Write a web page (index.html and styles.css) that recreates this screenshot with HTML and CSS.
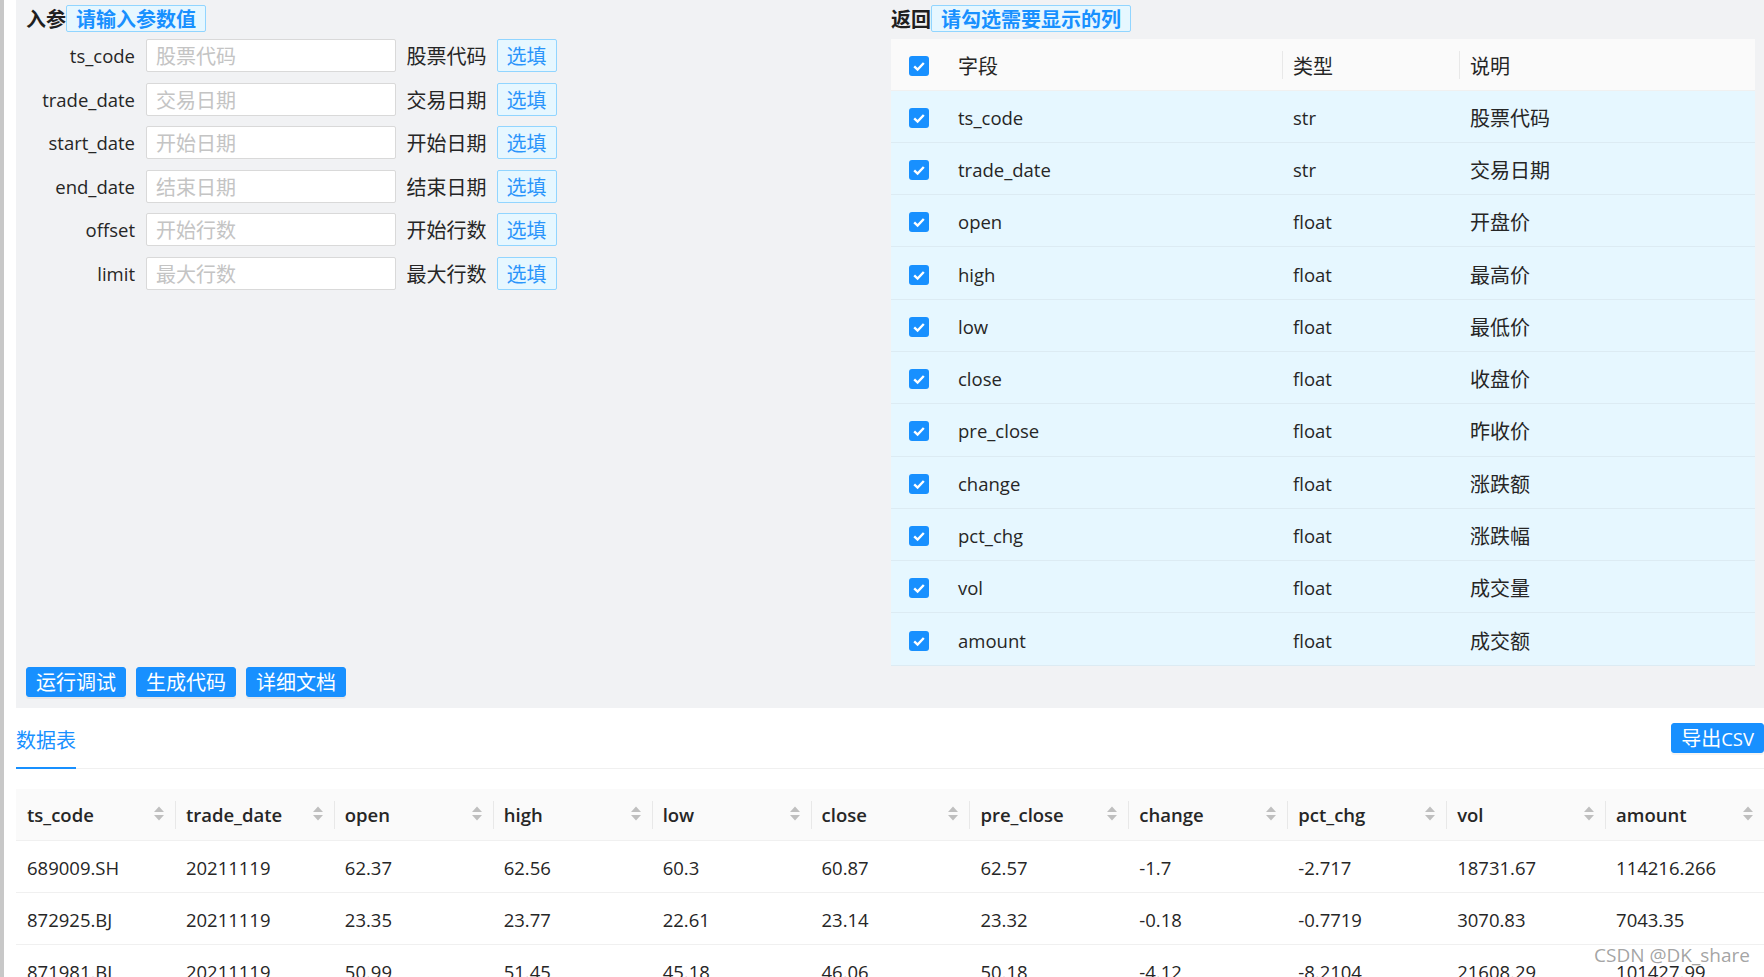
FILE: index.html
```html
<!DOCTYPE html>
<html lang="zh-CN">
<head>
<meta charset="utf-8">
<title>接口调试</title>
<link rel="stylesheet" href="styles.css">
</head>
<body>
<div class="app">
  <section class="panel">
    <div class="cols">
      <div class="col-in">
        <div class="title"><span class="title-text">入参</span><span class="tag">请输入参数值</span></div>
        <div class="form">
          <div class="frow"><label class="flabel">ts_code</label><input class="finput" placeholder="股票代码"><span class="fdesc">股票代码</span><button class="btn-fill">选填</button></div>
          <div class="frow"><label class="flabel">trade_date</label><input class="finput" placeholder="交易日期"><span class="fdesc">交易日期</span><button class="btn-fill">选填</button></div>
          <div class="frow"><label class="flabel">start_date</label><input class="finput" placeholder="开始日期"><span class="fdesc">开始日期</span><button class="btn-fill">选填</button></div>
          <div class="frow"><label class="flabel">end_date</label><input class="finput" placeholder="结束日期"><span class="fdesc">结束日期</span><button class="btn-fill">选填</button></div>
          <div class="frow"><label class="flabel">offset</label><input class="finput" placeholder="开始行数"><span class="fdesc">开始行数</span><button class="btn-fill">选填</button></div>
          <div class="frow"><label class="flabel">limit</label><input class="finput" placeholder="最大行数"><span class="fdesc">最大行数</span><button class="btn-fill">选填</button></div>
        </div>
      </div>
      <div class="col-out">
        <div class="title"><span class="title-text">返回</span><span class="tag">请勾选需要显示的列</span></div>
        <div class="rtable">
          <div class="rrow rhead"><div class="rc rc-check"><span class="cb"><svg viewBox="0 0 20 20" width="20" height="20"><path d="M5.2 10.3 L8.6 13.5 L14.8 7" fill="none" stroke="#fff" stroke-width="2.4"/></svg></span></div><div class="rc">字段</div><div class="rc rc-div">类型</div><div class="rc rc-div">说明</div></div>
          <div class="rrow"><div class="rc rc-check"><span class="cb"><svg viewBox="0 0 20 20" width="20" height="20"><path d="M5.2 10.3 L8.6 13.5 L14.8 7" fill="none" stroke="#fff" stroke-width="2.4"/></svg></span></div><div class="rc lt">ts_code</div><div class="rc lt">str</div><div class="rc">股票代码</div></div>
          <div class="rrow"><div class="rc rc-check"><span class="cb"><svg viewBox="0 0 20 20" width="20" height="20"><path d="M5.2 10.3 L8.6 13.5 L14.8 7" fill="none" stroke="#fff" stroke-width="2.4"/></svg></span></div><div class="rc lt">trade_date</div><div class="rc lt">str</div><div class="rc">交易日期</div></div>
          <div class="rrow"><div class="rc rc-check"><span class="cb"><svg viewBox="0 0 20 20" width="20" height="20"><path d="M5.2 10.3 L8.6 13.5 L14.8 7" fill="none" stroke="#fff" stroke-width="2.4"/></svg></span></div><div class="rc lt">open</div><div class="rc lt">float</div><div class="rc">开盘价</div></div>
          <div class="rrow"><div class="rc rc-check"><span class="cb"><svg viewBox="0 0 20 20" width="20" height="20"><path d="M5.2 10.3 L8.6 13.5 L14.8 7" fill="none" stroke="#fff" stroke-width="2.4"/></svg></span></div><div class="rc lt">high</div><div class="rc lt">float</div><div class="rc">最高价</div></div>
          <div class="rrow"><div class="rc rc-check"><span class="cb"><svg viewBox="0 0 20 20" width="20" height="20"><path d="M5.2 10.3 L8.6 13.5 L14.8 7" fill="none" stroke="#fff" stroke-width="2.4"/></svg></span></div><div class="rc lt">low</div><div class="rc lt">float</div><div class="rc">最低价</div></div>
          <div class="rrow"><div class="rc rc-check"><span class="cb"><svg viewBox="0 0 20 20" width="20" height="20"><path d="M5.2 10.3 L8.6 13.5 L14.8 7" fill="none" stroke="#fff" stroke-width="2.4"/></svg></span></div><div class="rc lt">close</div><div class="rc lt">float</div><div class="rc">收盘价</div></div>
          <div class="rrow"><div class="rc rc-check"><span class="cb"><svg viewBox="0 0 20 20" width="20" height="20"><path d="M5.2 10.3 L8.6 13.5 L14.8 7" fill="none" stroke="#fff" stroke-width="2.4"/></svg></span></div><div class="rc lt">pre_close</div><div class="rc lt">float</div><div class="rc">昨收价</div></div>
          <div class="rrow"><div class="rc rc-check"><span class="cb"><svg viewBox="0 0 20 20" width="20" height="20"><path d="M5.2 10.3 L8.6 13.5 L14.8 7" fill="none" stroke="#fff" stroke-width="2.4"/></svg></span></div><div class="rc lt">change</div><div class="rc lt">float</div><div class="rc">涨跌额</div></div>
          <div class="rrow"><div class="rc rc-check"><span class="cb"><svg viewBox="0 0 20 20" width="20" height="20"><path d="M5.2 10.3 L8.6 13.5 L14.8 7" fill="none" stroke="#fff" stroke-width="2.4"/></svg></span></div><div class="rc lt">pct_chg</div><div class="rc lt">float</div><div class="rc">涨跌幅</div></div>
          <div class="rrow"><div class="rc rc-check"><span class="cb"><svg viewBox="0 0 20 20" width="20" height="20"><path d="M5.2 10.3 L8.6 13.5 L14.8 7" fill="none" stroke="#fff" stroke-width="2.4"/></svg></span></div><div class="rc lt">vol</div><div class="rc lt">float</div><div class="rc">成交量</div></div>
          <div class="rrow"><div class="rc rc-check"><span class="cb"><svg viewBox="0 0 20 20" width="20" height="20"><path d="M5.2 10.3 L8.6 13.5 L14.8 7" fill="none" stroke="#fff" stroke-width="2.4"/></svg></span></div><div class="rc lt">amount</div><div class="rc lt">float</div><div class="rc">成交额</div></div>
        </div>
      </div>
    </div>
    <div class="actions">
      <button class="btn-primary">运行调试</button>
      <button class="btn-primary">生成代码</button>
      <button class="btn-primary">详细文档</button>
    </div>
  </section>

  <section class="data">
    <div class="tabs-nav">
      <div class="tab">数据表</div>
      <button class="btn-primary btn-export">导出<span class="lt-in">CSV</span></button>
    </div>
    <table class="dtable">
      <thead>
        <tr>
          <th><div class="th-in"><span>ts_code</span><svg class="sorter" viewBox="0 0 10 15" width="10" height="15"><path d="M0 6 L5 0.5 L10 6 Z M0 9 L10 9 L5 14.5 Z" fill="#bfbfbf"/></svg></div></th>
          <th><div class="th-in"><span>trade_date</span><svg class="sorter" viewBox="0 0 10 15" width="10" height="15"><path d="M0 6 L5 0.5 L10 6 Z M0 9 L10 9 L5 14.5 Z" fill="#bfbfbf"/></svg></div></th>
          <th><div class="th-in"><span>open</span><svg class="sorter" viewBox="0 0 10 15" width="10" height="15"><path d="M0 6 L5 0.5 L10 6 Z M0 9 L10 9 L5 14.5 Z" fill="#bfbfbf"/></svg></div></th>
          <th><div class="th-in"><span>high</span><svg class="sorter" viewBox="0 0 10 15" width="10" height="15"><path d="M0 6 L5 0.5 L10 6 Z M0 9 L10 9 L5 14.5 Z" fill="#bfbfbf"/></svg></div></th>
          <th><div class="th-in"><span>low</span><svg class="sorter" viewBox="0 0 10 15" width="10" height="15"><path d="M0 6 L5 0.5 L10 6 Z M0 9 L10 9 L5 14.5 Z" fill="#bfbfbf"/></svg></div></th>
          <th><div class="th-in"><span>close</span><svg class="sorter" viewBox="0 0 10 15" width="10" height="15"><path d="M0 6 L5 0.5 L10 6 Z M0 9 L10 9 L5 14.5 Z" fill="#bfbfbf"/></svg></div></th>
          <th><div class="th-in"><span>pre_close</span><svg class="sorter" viewBox="0 0 10 15" width="10" height="15"><path d="M0 6 L5 0.5 L10 6 Z M0 9 L10 9 L5 14.5 Z" fill="#bfbfbf"/></svg></div></th>
          <th><div class="th-in"><span>change</span><svg class="sorter" viewBox="0 0 10 15" width="10" height="15"><path d="M0 6 L5 0.5 L10 6 Z M0 9 L10 9 L5 14.5 Z" fill="#bfbfbf"/></svg></div></th>
          <th><div class="th-in"><span>pct_chg</span><svg class="sorter" viewBox="0 0 10 15" width="10" height="15"><path d="M0 6 L5 0.5 L10 6 Z M0 9 L10 9 L5 14.5 Z" fill="#bfbfbf"/></svg></div></th>
          <th><div class="th-in"><span>vol</span><svg class="sorter" viewBox="0 0 10 15" width="10" height="15"><path d="M0 6 L5 0.5 L10 6 Z M0 9 L10 9 L5 14.5 Z" fill="#bfbfbf"/></svg></div></th>
          <th><div class="th-in"><span>amount</span><svg class="sorter" viewBox="0 0 10 15" width="10" height="15"><path d="M0 6 L5 0.5 L10 6 Z M0 9 L10 9 L5 14.5 Z" fill="#bfbfbf"/></svg></div></th>
        </tr>
      </thead>
      <tbody>
        <tr><td>689009.SH</td><td>20211119</td><td>62.37</td><td>62.56</td><td>60.3</td><td>60.87</td><td>62.57</td><td>-1.7</td><td>-2.717</td><td>18731.67</td><td>114216.266</td></tr>
        <tr><td>872925.BJ</td><td>20211119</td><td>23.35</td><td>23.77</td><td>22.61</td><td>23.14</td><td>23.32</td><td>-0.18</td><td>-0.7719</td><td>3070.83</td><td>7043.35</td></tr>
        <tr><td>871981.BJ</td><td>20211119</td><td>50.99</td><td>51.45</td><td>45.18</td><td>46.06</td><td>50.18</td><td>-4.12</td><td>-8.2104</td><td>21608.29</td><td>101427.99</td></tr>
      </tbody>
    </table>
  </section>
  <div class="watermark">CSDN @DK_share</div>
</div>
</body>
</html>
```

FILE: styles.css
```css
html, body {
  margin: 0;
  padding: 0;
  overflow: hidden;
  background: #fff;
}

body {
  font-family: "Noto Sans CJK SC", "Noto Sans", sans-serif;
  font-size: 20px;
  color: #262626;
}

/* Latin text: Segoe-like proportions */
.lt,
.flabel,
.dtable th,
.dtable td {
  font-family: "Open Sans", "Noto Sans CJK SC", sans-serif;
  font-size: 18.5px;
}

.lt-in {
  font-family: "Open Sans", "Noto Sans CJK SC", sans-serif;
  font-size: 18.5px;
}

.app {
  position: relative;
  height: 977px;
  box-sizing: border-box;
  border-left: 4px solid #c8c8c8;
  padding-left: 12px;
  overflow: hidden;
}

/* ---------- top panel ---------- */
.panel {
  background: #f1f2f4;
  padding: 5px 9px 11px 10px;
}

.cols {
  display: grid;
  grid-template-columns: 1fr 864px;
  column-gap: 10px;
  align-items: start;
}

.title {
  display: flex;
  align-items: center;
  height: 27px;
  margin-bottom: 7px;
}

.title-text {
  font-weight: 700;
  line-height: 27px;
  color: #1f1f1f;
}

.tag {
  height: 27px;
  box-sizing: border-box;
  line-height: 25px;
  padding: 0 9px;
  border: 1px solid #91d5ff;
  border-radius: 2px;
  background: #e6f7ff;
  color: #1890ff;
  font-weight: 700;
}

.form {
  display: flex;
  flex-direction: column;
  gap: 10.6px;
}

.frow {
  display: flex;
  align-items: center;
  height: 33px;
}

.flabel {
  flex: none;
  width: 109px;
  margin-right: 11px;
  text-align: right;
  line-height: 33px;
}

.finput {
  flex: none;
  width: 249.5px;
  height: 33px;
  box-sizing: border-box;
  padding: 0 9px;
  border: 1px solid #d9d9d9;
  border-radius: 2px;
  background: #fff;
  font-family: inherit;
  font-size: 20px;
  color: #262626;
  outline: none;
}

.finput::placeholder {
  color: #c4c4c4;
}

.fdesc {
  flex: none;
  margin-left: 11px;
  line-height: 33px;
}

.btn-fill {
  flex: none;
  margin-left: 10px;
  height: 33px;
  box-sizing: border-box;
  padding: 0 9px;
  border: 1px solid #91d5ff;
  border-radius: 2px;
  background: #e6f7ff;
  color: #2b95fb;
  font-family: inherit;
  font-size: 20px;
  line-height: 31px;
}

/* return column table */
.rtable {
  background: #e6f7ff;
}

.rrow {
  display: grid;
  grid-template-columns: 56px 335px 177px 1fr;
  align-items: center;
  height: 52.3px;
  box-sizing: border-box;
  padding-top: 3px;
  border-bottom: 1px solid #dcebf3;
}

.rhead {
  height: 51.5px;
  background: #fafafa;
  border-bottom-color: #f0f0f0;
}

.rc {
  position: relative;
  padding: 0 11px;
  line-height: 28px;
}

.rc-check {
  display: flex;
  justify-content: center;
  padding: 0;
}

.rc-div::before {
  content: "";
  position: absolute;
  left: 0;
  top: -1px;
  width: 1px;
  height: 28px;
  background: #e8e8e8;
}

.cb {
  display: flex;
  width: 20px;
  height: 20px;
  border-radius: 3px;
  background: #1890ff;
}

/* action buttons */
.actions {
  display: flex;
  gap: 10px;
  margin-top: 1px;
}

.btn-primary {
  height: 30px;
  box-sizing: border-box;
  padding: 0 9px;
  border: 1px solid #1890ff;
  border-radius: 3px;
  background: #1890ff;
  color: #fff;
  font-family: inherit;
  font-size: 20px;
  line-height: 28px;
  box-shadow: 0 2px 0 rgba(0, 0, 0, 0.045);
}

/* ---------- data section ---------- */
.tabs-nav {
  display: flex;
  justify-content: space-between;
  align-items: center;
  height: 60px;
  border-bottom: 1px solid #f0f0f0;
}

.tab {
  align-self: stretch;
  display: flex;
  align-items: center;
  box-sizing: border-box;
  padding-top: 4px;
  margin-bottom: -1px;
  border-bottom: 2px solid #1890ff;
  color: #1890ff;
}

.btn-export {
  padding: 0 9px;
}

.dtable {
  width: 100%;
  table-layout: fixed;
  border-collapse: separate;
  border-spacing: 0;
  margin-top: 20px;
}

.dtable th,
.dtable td {
  height: 52px;
  box-sizing: border-box;
  padding: 3px 11px 0;
  border-bottom: 1px solid #f0f0f0;
  text-align: left;
  white-space: nowrap;
  line-height: 28px;
}

.dtable th {
  position: relative;
  padding-top: 2px;
  background: #fafafa;
  font-weight: 600;
  color: #262626;
}

.dtable th + th::before {
  content: "";
  position: absolute;
  left: 0;
  top: 12px;
  width: 1px;
  height: 28px;
  background: #e8e8e8;
}

.th-in {
  display: flex;
  justify-content: space-between;
  align-items: center;
}

.sorter {
  flex: none;
  margin-top: -4px;
}

.watermark {
  position: absolute;
  right: 14px;
  top: 942px;
  font-family: "Open Sans", sans-serif;
  font-size: 19px;
  color: rgba(140, 140, 140, 0.8);
  text-shadow: 0 0 2px #fff;
}
```
